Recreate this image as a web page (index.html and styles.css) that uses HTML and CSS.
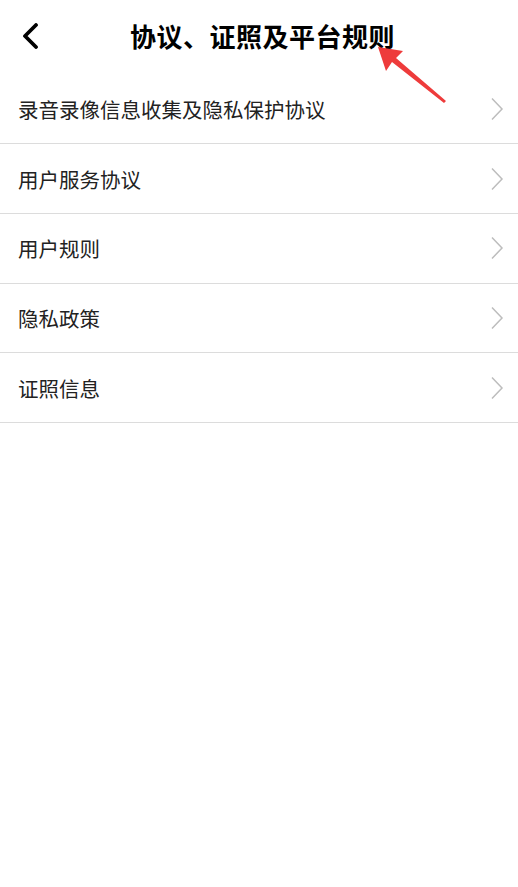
FILE: index.html
```html
<!DOCTYPE html>
<html lang="zh-CN">
<head>
    <meta charset="UTF-8">
    <meta name="viewport" content="width=device-width, initial-scale=1.0">
    <title>协议、证照及平台规则</title>
    <link rel="stylesheet" href="styles.css">
</head>
<body>
    <div class="page">
        <!-- Top bar -->
        <div class="header">
            <span class="back">
                <svg width="20" height="26" viewBox="0 0 20 26">
                    <path d="M16 2 L5 13 L16 24" fill="none" stroke="#000" stroke-width="3.8" stroke-linecap="round" stroke-linejoin="round"/>
                </svg>
            </span>
            <h1 class="title">协议、证照及平台规则</h1>
        </div>

        <!-- Rules list -->
        <ul class="list">
            <li class="item"><span>录音录像信息收集及隐私保护协议</span><svg class="arrow" width="14" height="24" viewBox="0 0 14 24"><path d="M2 1.5 L12 12 L2 22.5" fill="none" stroke="#bdbdbd" stroke-width="1.5"/></svg></li>
            <li class="item"><span>用户服务协议</span><svg class="arrow" width="14" height="24" viewBox="0 0 14 24"><path d="M2 1.5 L12 12 L2 22.5" fill="none" stroke="#bdbdbd" stroke-width="1.5"/></svg></li>
            <li class="item"><span>用户规则</span><svg class="arrow" width="14" height="24" viewBox="0 0 14 24"><path d="M2 1.5 L12 12 L2 22.5" fill="none" stroke="#bdbdbd" stroke-width="1.5"/></svg></li>
            <li class="item"><span>隐私政策</span><svg class="arrow" width="14" height="24" viewBox="0 0 14 24"><path d="M2 1.5 L12 12 L2 22.5" fill="none" stroke="#bdbdbd" stroke-width="1.5"/></svg></li>
            <li class="item"><span>证照信息</span><svg class="arrow" width="14" height="24" viewBox="0 0 14 24"><path d="M2 1.5 L12 12 L2 22.5" fill="none" stroke="#bdbdbd" stroke-width="1.5"/></svg></li>
        </ul>

        <!-- Red pointer drawn over the page -->
        <svg class="pointer" width="80" height="64" viewBox="0 0 80 64">
            <polygon points="0,0 25,4 18,11 68,54 66,56 14,15 8,24" fill="#ee3b3b"/>
        </svg>
    </div>
</body>
</html>
```

FILE: styles.css
```css
/* Page styling */
body {
    margin: 0;
    background-color: #fff;
    font-family: "Noto Sans CJK SC", "Noto Sans", sans-serif;
    color: #222;
}

.page {
    position: relative;
    width: 518px;
    min-height: 887px;
}

.header {
    height: 74.5px;
    display: flex;
    align-items: center;
    position: relative;
}

.back {
    position: absolute;
    left: 20px;
    top: 23px;
}

.title {
    margin: 0 0 0 130px;
    font-size: 26px;
    font-weight: bold;
    color: #000;
    letter-spacing: 0.5px;
    line-height: 1;
    padding-bottom: 2px;
}

.list {
    list-style: none;
    margin: 0;
    padding: 0;
}

.item {
    box-sizing: border-box;
    height: 69.7px;
    display: flex;
    align-items: center;
    justify-content: space-between;
    padding: 0 14px 0 18px;
    border-bottom: 1.5px solid #dcdcdc;
    font-size: 20.5px;
}

.arrow {
    display: block;
}

.pointer {
    position: absolute;
    left: 378px;
    top: 47px;
}
```
